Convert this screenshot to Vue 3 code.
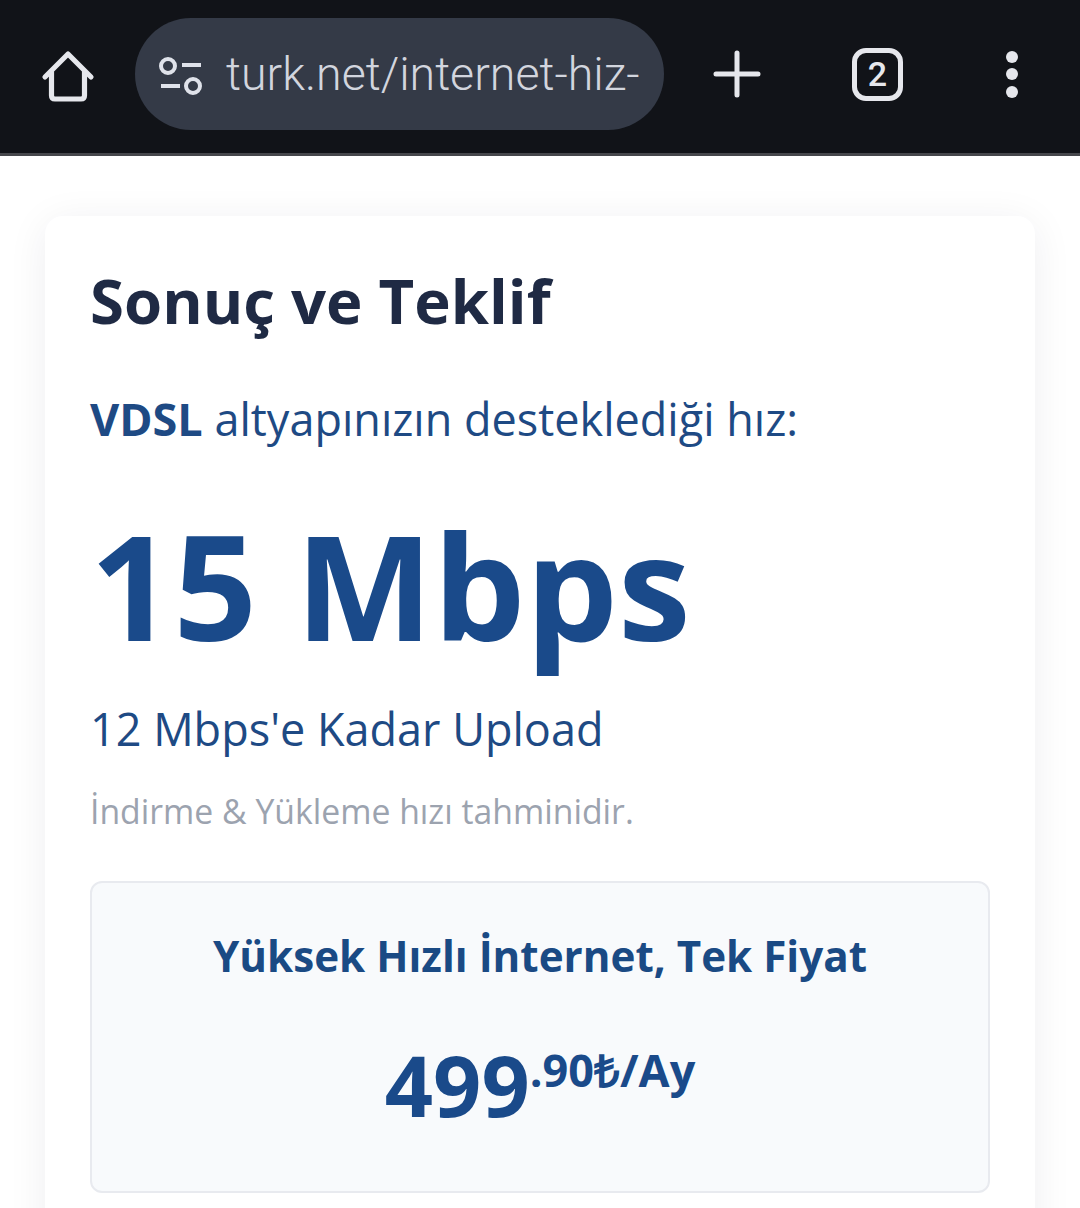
<script setup>
</script>

<template>
  <div class="page">
    <header class="bar">
      <svg class="home" width="56" height="56" viewBox="0 0 56 56" fill="none">
        <path d="M5 29 L28 6 L51 29 M11.500 24 V47.5 Q11.500 51 15 51 H41 Q44.500 51 44.500 47.500 V24" stroke="#e6e7ec" stroke-width="5.200" stroke-linecap="round" stroke-linejoin="round"/>
      </svg>
      <div class="pill">
        <svg class="tune" width="44" height="38" viewBox="0 0 44 38" fill="none">
          <circle cx="9" cy="9" r="7" stroke="#dfe2ea" stroke-width="4"/>
          <path d="M23 8 H42 M2 29 H21" stroke="#dfe2ea" stroke-width="4"/>
          <circle cx="34" cy="29" r="7" stroke="#dfe2ea" stroke-width="4"/>
        </svg>
        <span class="url">turk.net/internet-hiz-</span>
      </div>
      <svg class="plus" width="48" height="48" viewBox="0 0 48 48" fill="none">
        <path d="M24 3 V45 M3 24 H45" stroke="#e6e7ec" stroke-width="5" stroke-linecap="round"/>
      </svg>
      <div class="tabs">2</div>
      <div class="dots"><i></i><i></i><i></i></div>
    </header>
    <main class="content">
      <section class="card">
        <h1>Sonuç ve Teklif</h1>
        <p class="sub"><b>VDSL</b> altyapınızın desteklediği hız:</p>
        <p class="speed">15 Mbps</p>
        <p class="upload">12 Mbps'e Kadar Upload</p>
        <p class="note">İndirme &amp; Yükleme hızı tahminidir.</p>
        <div class="box">
          <h2>Yüksek Hızlı İnternet, Tek Fiyat</h2>
          <p class="price"><span class="big">499</span><span class="small">.90₺/Ay</span></p>
        </div>
      </section>
    </main>
  </div>
</template>

<style>
html, body { background: #fff; overflow: hidden; }
</style>

<style scoped>
.page { width: 1080px; height: 1208px; overflow: hidden; font-family: "Open Sans", sans-serif; }
.bar { position: relative; height: 153px; background: #111318; border-bottom: 3px solid #46474c; display: flex; align-items: center; }
.home { margin-left: 40px; margin-top: -1px; flex: none; }
.pill { margin-left: 39px; width: 529px; height: 112px; margin-top: -5px; border-radius: 56px; background: #343a47; display: flex; align-items: center; overflow: hidden; flex: none; }
.tune { margin-left: 24px; margin-top: 3px; flex: none; }
.url { margin-left: 23px; font-family: Roboto, sans-serif; font-size: 46.500px; font-weight: 300; color: #d2d5de; white-space: nowrap; }
.plus { margin-left: 49px; margin-top: -5px; flex: none; }
.tabs { margin-left: 91px; margin-top: -5px; width: 51px; height: 53px; box-sizing: border-box; border: 5px solid #e6e7ec; border-radius: 14px; color: #e6e7ec; font-family: Roboto, sans-serif; font-weight: 500; font-size: 34px; display: flex; align-items: center; justify-content: center; flex: none; }
.dots { margin-left: 103px; margin-top: -5px; display: flex; flex-direction: column; gap: 5.500px; flex: none; }
.dots i { display: block; width: 12px; height: 12px; border-radius: 50%; background: #e6e7ec; }
.content { padding: 60px 45px 0; }
.card { background: #fff; border-radius: 18px; box-shadow: 0 6px 40px rgba(20, 30, 60, 0.07); padding: 44px 45px 60px; height: 1100px; box-sizing: border-box; }
h1 { margin: 0; font-size: 61.700px; line-height: 80px; font-weight: 700; color: #1f2a44; }
.sub { margin: 49px 0 0; font-size: 45px; line-height: 60px; color: #1e4a84; }
.sub b { font-weight: 700; }
.speed { margin: 41px 0 0; font-size: 146.200px; line-height: 190px; font-weight: 700; color: #1a4a8a; }
.upload { margin: 19px 0 0; font-size: 45px; line-height: 60px; color: #1e4a84; }
.note { margin: 28px 0 0; font-size: 33.750px; line-height: 48px; color: #9ca3af; }
.box { margin-top: 46px; height: 312px; box-sizing: border-box; background: #f8fafc; border: 2px solid #e8eaef; border-radius: 12px; text-align: center; padding-top: 43px; }
h2 { margin: 0; font-size: 42.200px; line-height: 60px; font-weight: 700; color: #1a4a84; }
.price { margin: 34px 0 0; color: #1a4a8a; font-weight: 700; line-height: 100px; white-space: nowrap; }
.big { font-size: 84.500px; }
.small { font-size: 45px; vertical-align: 30px; }
</style>
